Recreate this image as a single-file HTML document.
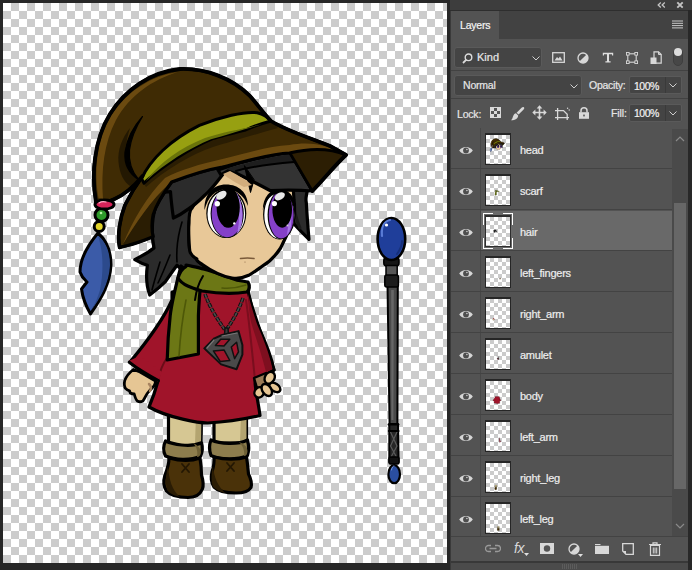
<!DOCTYPE html>
<html><head><meta charset="utf-8">
<style>
*{margin:0;padding:0;box-sizing:border-box}
html,body{width:692px;height:570px;overflow:hidden;background:#272727;font-family:"Liberation Sans",sans-serif;}
.abs{position:absolute}
#canvas{position:absolute;left:3px;top:3px;width:444px;height:560px;
 background:repeating-conic-gradient(#cccccc 0 25%,#ffffff 0 50%) 0 0/16px 16px;overflow:hidden}
#panel{position:absolute;left:450px;top:0;width:238px;height:570px;background:#535353;border-left:1px solid #3a3a3a}
#topstrip{position:absolute;left:450px;top:0;width:242px;height:10px;background:#3d3d3d}
#topline{position:absolute;left:450px;top:10px;width:238px;height:1px;background:#2e2e2e}
#tabbar{position:absolute;left:451px;top:11px;width:237px;height:28px;background:#424242}
#tab{position:absolute;left:451px;top:11px;width:48px;height:28px;background:#535353;color:#f4f4f4;font-size:10.5px;padding:8px 0 0 9px;letter-spacing:-0.2px}
#rstrip{position:absolute;left:688px;top:10px;width:4px;height:560px;background:#282828}
.dd{position:absolute;background:#444444;border:1px solid #5a5a5a;border-radius:3px;color:#eaeaea;font-size:11px}
.sep{position:absolute;left:451px;width:237px;height:1px;background:#424242}
.lbl{position:absolute;color:#e6e6e6;font-size:11px}
.row{position:absolute;left:451px;width:221px;height:41px;border-bottom:1px solid #434343}
.row .hl{position:absolute;left:30px;top:1px;width:191px;height:39px;background:#696969}
.row .eyecol{position:absolute;left:29px;top:0;width:1px;height:40px;background:#474747}
.row .thumb{position:absolute;left:34px;top:5px;width:26px;height:32px;border:1px solid #262626;border-top-width:2px;
 background:repeating-conic-gradient(#cbcbcb 0 25%,#ffffff 0 50%) 0 0/8px 8px}
.row.sel .thumb{border-color:#2e2e2e}
.row .name{position:absolute;left:69px;top:16px;color:#eeeeee;font-size:11px;letter-spacing:-0.25px}
.row svg.eye{position:absolute;left:8px;top:18px}
.brk{position:absolute;background:#fff}
.b1{left:32px;top:3px;width:10px;height:12px;background:none;border-left:1px solid #fff;border-top:1px solid #fff}
.b2{left:52px;top:3px;width:10px;height:12px;background:none;border-right:1px solid #fff;border-top:1px solid #fff}
.b3{left:32px;top:28px;width:10px;height:11px;background:none;border-left:1px solid #fff;border-bottom:1px solid #fff}
.b4{left:52px;top:28px;width:10px;height:11px;background:none;border-right:1px solid #fff;border-bottom:1px solid #fff}
.lbl,#tab,.row .name{-webkit-text-stroke:0.2px currentColor}
</style></head><body>
<div id="canvas"><svg class="abs" style="left:-3px;top:-3px" width="450" height="566" viewBox="0 0 450 566" stroke-linejoin="round" stroke-linecap="round">

<g stroke="#000">
<path d="M387.5 284 L397.8 284 L397.4 426 L389.6 426 Z" fill="#4a4a4a" stroke-width="2"/>
<path d="M391.2 290 L393.8 290 L393.4 420 L391.4 420Z" fill="#676767" stroke="none"/>
<path d="M389.3 424 H398 L398.6 462 H389.3Z" fill="#262626" stroke-width="2"/>
<path d="M390.5 432L397 446L390.5 458M397 432L390.5 446L397 458" fill="none" stroke="#5a5a5a" stroke-width="1.2"/>
<path d="M388.5 424.5 H398.5 M388.8 431 H398.6" stroke-width="2"/>
<rect x="389" y="457" width="10" height="7" rx="1.5" fill="#111" stroke-width="1.5"/>
<ellipse cx="394.2" cy="474.2" rx="5.8" ry="9" fill="#2a4ea0" stroke-width="2.2"/>
<path d="M391.5 470 C392 467 393 466 394 466" fill="none" stroke="#7a9ae0" stroke-width="1"/>
<rect x="383.8" y="257.5" width="15.2" height="8.5" rx="3" fill="#151515" stroke-width="1.5"/>
<rect x="386" y="265.5" width="11.2" height="10.5" fill="#555" stroke-width="1.5"/>
<rect x="384.8" y="275" width="13.6" height="12" rx="2" fill="#1c1c1c" stroke-width="1.5"/>
<ellipse cx="391.4" cy="239" rx="13.8" ry="21" fill="#1f3e9a" stroke-width="2.6"/>
<path d="M382 236 C381 226 385 221 390 220" fill="none" stroke="#5a7cd6" stroke-width="2.2"/>
<path d="M397 254 C400 250 402 246 402 241" fill="none" stroke="#16307a" stroke-width="2"/>
<circle cx="386.5" cy="225" r="1.6" fill="#fff" stroke="none"/>
</g>

<g stroke="#000" stroke-width="3.2"><path d="M214 416 L246.5 416 L246.5 443 L214 443Z" fill="#d6c793"/>
<path d="M241 416 L246.5 416 L246.5 442 L240 442Z" fill="#b3a470" stroke="none"/>
<path d="M211 440 C220 444 238 445 247.5 440 C249 446 249 451 247.5 455.5 C238 460 220 460 211 455.5 C209 450 209 445 211 440Z" fill="#8d7d4d"/>
<path d="M214 457 C225 460 238 460 246.5 457 C247.5 463 248 469 248.5 474 C251 479 252 484 251 487.5 C249 491 244 493 236 493 C226 493 218 491 214 487 C210.5 482 211 476 212 472 C213.5 467 214.5 462 214 457Z" fill="#4a3209"/>
<path d="M213 466 C211 474 211 482 213 487 C216 490 221 492 225 493 C218 486 214 478 213 466Z" fill="#2a1c04" stroke="none"/><path d="M239 442 C244 444 247 446 247.5 451 C247.5 454 246 456 244 456 C245 451 243 446 239 442Z" fill="#6e6036" stroke="none"/>
<path d="M227 463 L234 471 M234 463 L227 471" fill="none" stroke="#231703" stroke-width="1.8"/></g>
<g stroke="#000" stroke-width="3.2"><path d="M168.5 412 L201.5 412 L201 446 L168.5 446Z" fill="#d6c793"/>
<path d="M196 414 L201.5 414 L201 444 L195 444Z" fill="#b3a470" stroke="none"/>
<path d="M165.5 441 C172 444 190 448 201.5 442.8 C203 448 202 453 200.7 456 C190 461 175 460 165.5 456 C163 451 163 446 165.5 441Z" fill="#8d7d4d"/>
<path d="M169 458 C180 461 192 461 200 458 C201 464 201.5 470 201.5 475 C203 480 204 485 202.4 489 C200 495 195 497.5 188 497.5 C178 497.5 170 495 166.5 491 C163 486 163.5 480 165 475 C167 470 169 464 169 458Z" fill="#4a3209"/>
<path d="M168 466 C166 474 165 482 167 490 C170 494 176 496 180 497 C172 490 169 480 168 466Z" fill="#2a1c04" stroke="none"/><path d="M193 443 C197 445 200 447 201 452 C201 455 199 457 197 457 C198 452 197 447 193 443Z" fill="#6e6036" stroke="none"/>
<path d="M182 464 L189 472 M189 464 L182 472" fill="none" stroke="#231703" stroke-width="1.8"/></g>
<g stroke="#000" stroke-width="3.2"><path d="M247.6 291 C252 310 262 335 274 370 L255 380 C252 350 249 320 246 300Z" fill="#a0142a"/></g>
<g stroke="#000" stroke-width="3.2">
<path d="M172 300 C163 320 150 338 130 362 C140 371 150 377 158 381 C155 392 152 400 149 407 C168 418 200 423 207.7 423 C225 422 245 419 260 415.5 C258 400 255 390 255 380 C262 377 268 374 274 370 C270 350 262 335 256 322 C252 310 250 300 247.6 288 C225 290 195 288 172 292 L172 300Z" fill="#a0142a"/>
<path d="M158 381 C160 370 164 362 167 358" fill="none" stroke="#6a0c18" stroke-width="2"/>
<path d="M248 294 C251 305 254 315 257 324 C263 338 269 352 272.5 369 L266 372 C261 352 255 336 251 322 C249 312 248 302 248 294Z" fill="#7e0f1f" stroke="none"/><path d="M255 380 C252 350 249 320 246 300" fill="none" stroke="#7a0e1e" stroke-width="2"/>
</g>
<g stroke="#000" stroke-width="3.2">
<path d="M205 294 C210 308 218 320 225 330 M243 298 C238 312 232 322 226 330" fill="none" stroke="#111" stroke-width="3.6" stroke-dasharray="4.2 1" stroke-linecap="butt"/>
<path d="M205 294 C210 308 218 320 225 330 M243 298 C238 312 232 322 226 330" fill="none" stroke="#4a4a4a" stroke-width="1.6" stroke-dasharray="2.6 2.6" stroke-dashoffset="-0.8" stroke-linecap="round"/>

<path d="M225 328 L228 328 L228.5 335 L224.5 335Z" fill="#3a3a3a" stroke="#111" stroke-width="1.5"/>
<path d="M222.1 335 L238.5 331.1 L242.4 345 L242.4 354.7 L236.6 369.2 L221.1 364.4 L204.3 348.4 L214.4 338.3Z" fill="#4a4a4a" stroke="#111" stroke-width="2"/>
<path d="M215.4 345.6 L220.7 339.3 L229.8 339.3 L224 346Z M213.4 350.9 L224 349.9 L229.8 360.5 L220.2 361.5Z M231.3 347 L236.6 342.2 L238.5 351.8 L234.6 358.6Z" fill="#a0142a" stroke="#111" stroke-width="1.5"/>
<path d="M207 348 L214 340 M222 336 L237 333" fill="none" stroke="#777" stroke-width="1.2"/>
</g>
<g stroke="#000" stroke-width="3.2"><path d="M133.4 369.5 C129 373 126 377 124.7 380.5 C124 384 124.5 387 125.5 388.4 C127 390 128.5 390.5 129.5 390.8 L130.3 393 C132 394 133 394 134.2 394 C135 397 136 400 137.4 401 C139 402 141 402 142.9 401 C145 398 146 395 147.6 393 C150 390 152 388 154 386 C155 384.5 155.5 383 155.5 381 L140 372Z" fill="#e6c694" stroke-width="2.8"/>
<path d="M149 384 C151 386 152 388 150 391" fill="none" stroke="#a88460" stroke-width="2.5"/><path d="M128.5 361 C138 368 148 375 159 380 L162 372 L140 356Z" fill="#a0142a" stroke="none"/><path d="M129.2 362.2 C138 369 148 375 158.4 380.5" fill="none" stroke-width="3"/></g>
<g stroke="#000" stroke-width="3.2"><path d="M254 378 L266 373 L268 386 L257 388Z" fill="#9a7a55" stroke-width="2.4"/><ellipse cx="259.3" cy="392.3" rx="4.6" ry="5.4" transform="rotate(35 259.3 392.3)" fill="#e6c694" stroke-width="2.4"/><ellipse cx="274.8" cy="387.4" rx="6.2" ry="3.9" transform="rotate(35 274.8 387.4)" fill="#e6c694" stroke-width="2.4"/><ellipse cx="266.8" cy="390" rx="4.4" ry="6.6" transform="rotate(-35 266.8 390)" fill="#e6c694" stroke-width="2.4"/><ellipse cx="269.7" cy="377.8" rx="4.8" ry="6.3" transform="rotate(30 269.7 377.8)" fill="#e6c694" stroke-width="2.4"/></g>
<g stroke="#000" stroke-width="3.2"><clipPath id="cpPony"><rect x="100" y="238" width="120" height="80"/></clipPath><g clip-path="url(#cpPony)">
<path d="M168 186 L225 169 C218 180 208 190 204 195 C199 200 196 205 193.8 208.4 C191 215 189 220 189 223 C188.5 235 189 245 189.5 248.4 C190 254 194 257 196.8 259 C198 262 200 263 204 266 L206 274 L186 274 C182 270 179 267 177 265.3 C172 272 168 278 165.7 281.3 C160 287 155 291 149.7 295 C146 285 146 275 147.4 265.3 C143 264 139 262 134.8 259.6 C141 256 148 253 154 248 C151 232 152 218 156 205 C160 195 163 190 168 186Z" fill="#2b2b2b"/>
<path d="M160 262 C157 272 154 282 152 290 M170 255 C166 265 162 275 158 283 M182 222 C178 235 176 248 177 262" fill="none" stroke="#000" stroke-width="1.6"/>
</g></g>
<g stroke="#000" stroke-width="3.2">
<path d="M181 266 C176 285 172 300 170.2 315.5 C168 335 167.5 348 167.2 360 C178 358 188 356 198.4 354 C198.5 340 198.4 328 198.4 315.5 C199 300 200 290 201 282Z" fill="#6c7715"/>
<path d="M186 300 C182 320 180 340 179 356" fill="none" stroke="#4e5808" stroke-width="1.6"/>

<path d="M186 265 C195 267 200 268 203.4 269 C215 272 225 276 232.3 278.5 C238 281 243 281 248 282 C250 286 250 289 247 292 C235 294 220 294 202 291 C192 288 182 285 178 278 C180 272 183 268 186 266.6Z" fill="#6c7715"/>
<path d="M203 276 C198 284 196 292 195 300" fill="none" stroke="#000" stroke-width="2"/>
<path d="M222 288 C232 289 240 287 246 285" fill="none" stroke="#4e5808" stroke-width="1.5"/>
</g>
<g stroke="#000" stroke-width="3.2"><clipPath id="cpTop"><rect x="100" y="100" width="250" height="150"/></clipPath>
<path d="M150 215 L168 172 L222 158 L290 148 L312.4 191 L290 195 L200 200Z" fill="#1e1e1e" stroke="none"/>
<g clip-path="url(#cpTop)">
<path d="M168 186 L225 169 C218 180 208 190 204 195 C199 200 196 205 193.8 208.4 C191 215 189 220 189 223 C188.5 235 189 245 189.5 248.4 C190 254 194 257 196.8 259 C198 262 200 263 204 266 L206 274 L186 274 C182 270 179 267 177 265.3 C172 272 168 278 165.7 281.3 C160 287 155 291 149.7 295 C146 285 146 275 147.4 265.3 C143 264 139 262 134.8 259.6 C141 256 148 253 154 248 C151 232 152 218 156 205 C160 195 163 190 168 186Z" fill="#2b2b2b"/>
<path d="M160 262 C157 272 154 282 152 290 M170 255 C166 265 162 275 158 283 M182 222 C178 235 176 248 177 262" fill="none" stroke="#000" stroke-width="1.6"/>
</g>
<path d="M290.5 189 L307.5 190 C306 196 305.5 200 306.3 202.6 C307 215 308 228 309 239.5 C303 233 297 228 294 223.7 C292.5 216 292.3 208 292.3 202.6Z" fill="#2b2b2b"/>
<path d="M292.5 195 C294 210 296 220 300 228" fill="none" stroke="#1a1a1a" stroke-width="3"/>

<path d="M221 172 C240 165 270 162 292 170 L294 200 C296 215 292 225 289.7 227.4 C286 238 282 245 280.6 248 C274 258 268 263 262.3 266.2 C257 270 253 273 248.7 275.3 C243 278 238 279 232 278 C220 276 210 270 202 264.2 C198 262 196 260 196.8 259 C190 255 189.5 250 189.5 248.4 C188.5 235 188.5 228 189 223 C189 215 190 210 191.8 208.4 C197 199 202 195 204 195 C212 185 220 175 225 169Z" fill="#e8c898"/>

<path d="M168.4 181 C170 176 200 165 228 165 L228 167.5 C226 170 224 172 222.5 174.7 C217 182 211 190 205 195 C199 201 193 206 187.8 209.4 C183 213 178 216 173.4 218 C172 208 171 200 170.5 191.6 C166 192 163 192 160 193 C163 188 166 184 168.4 181Z" fill="#2b2b2b"/>

<path d="M218 170 C240 162 270 154 289.7 152.3 C298 165 306 180 312.4 191 C300 190 285 190 270 190.5 C258 184 242 176 229.5 170 L221 175Z" fill="#333333"/>
<path d="M226 169 C245 163 270 157 290 154 L295 162 C272 164 248 167 236 172Z" fill="#1e1e1e" stroke="none"/><path d="M236 171 C250 167 270 164 294 162" fill="none" stroke="#000" stroke-width="2"/><path d="M244.5 166 L250.5 192.5 L254 180 Z" fill="#000" stroke-width="1"/>
<g stroke="none">
<path d="M223 174 L230 171 C238 175 246 180 252 185 L244 187 C236 183 228 178 223 174Z" fill="#d2ad7c"/>
<ellipse cx="226.3" cy="213.5" rx="20" ry="24.5" fill="#000"/>
<ellipse cx="226.3" cy="214" rx="18.8" ry="23.2" fill="#fff"/>
<ellipse cx="227.2" cy="213.8" rx="16.6" ry="24" fill="#000"/>
<ellipse cx="227.2" cy="214" rx="15.6" ry="23.2" fill="#8540c8"/>
<path d="M236 192 C241 198 243 210 242 222 C241 228 239 232 237 234 C240 222 240 205 236 192Z" fill="#a878e8"/>
<ellipse cx="228.2" cy="207.5" rx="11.6" ry="20.3" fill="#000"/>
<path d="M204.5 210 C204 194 213 184.5 226 184.5 C239 184.5 248 193 248 206 C244 195 236 189.5 226 189.5 C215 189.5 208 197 204.5 210Z" fill="#000"/>
<ellipse cx="221.4" cy="195.3" rx="5.8" ry="3.6" fill="#e8e8e8" transform="rotate(-35 221.4 195.3)"/>
<circle cx="217.3" cy="203.8" r="2.7" fill="#fff"/>
<circle cx="234.3" cy="223.4" r="1.2" fill="#fff"/>
<ellipse cx="279.3" cy="214.5" rx="16.2" ry="25" fill="#000"/>
<ellipse cx="279.3" cy="215" rx="15" ry="23.8" fill="#fff"/>
<ellipse cx="281" cy="215" rx="13.4" ry="24.2" fill="#000"/>
<ellipse cx="281.2" cy="215.2" rx="12.4" ry="23.4" fill="#8540c8"/>
<path d="M287 196 C291 204 292 216 291 226 C290 230 289 233 287 235 C289 222 290 208 287 196Z" fill="#a878e8"/>
<ellipse cx="282.2" cy="209.5" rx="9.8" ry="18.2" fill="#000"/>
<path d="M262.8 210 C263 197 270 189 279.5 189 C289 189 295.5 197 295.5 209 C292 199 286 193.5 279.5 193.5 C272 193.5 266 199 262.8 210Z" fill="#000"/>
<ellipse cx="279.8" cy="196.3" rx="5.5" ry="3.5" fill="#e8e8e8" transform="rotate(-30 279.8 196.3)"/>
<circle cx="274.4" cy="203.6" r="2.6" fill="#fff"/>
<circle cx="287.5" cy="225.5" r="1" fill="#ccc"/>
</g>
<path d="M240.5 258.5 C245 257.8 250 257.8 254 258.5" fill="none" stroke="#7a5a3a" stroke-width="1.6"/><circle cx="245" cy="262" r="0.6" fill="#8a6a4a" stroke="none"/>

<path d="M96 202 C91 175 94 140 110 114 C125 90 150 72 180 69 C205 68 232 78 250 96 C258 105 264 114 271 121 C285 130 310 138 330 146 L346 155 C335 165 325 178 312.4 191 L289.7 152.3 C270 154 250 160 222.5 167 C205 170 190 175 171.6 182 C162 195 156 205 153 215 C151 225 152 232 153 236.7 C145 240 135 244 127.5 245.4 L119.6 247.5 C117 235 120 218 125 205 C130 195 136 185 142.6 176 C135 185 124 195 114.6 199 C108 202 101 203 96 202Z" fill="#3f2b04"/>

<path d="M289.7 152.3 C310 148 330 148 344 155 C335 165 325 178 312.4 191Z" fill="#2c1e03" stroke="none"/>
<path d="M289.7 152.3 L312.4 191" fill="none" stroke-width="2.5"/>

<path d="M98.5 198 C94 172 96 142 111 116 C125 93 150 76 178 72 C152 80 130 95 116 120 C104 143 101 170 103 199Z" fill="#6b4a10" stroke="none"/>

<path d="M127.5 245.4 C135 244 145 240 153 236.7 C152 232 151 225 153 215 C156 205 162 195 171.6 182 C150 200 135 225 123 244Z" fill="#2a1d03" stroke="none"/>
<path d="M146 187 C165 170 192 154 213 147 C230 142 250 136 278 128 L271 121 C260 124 252 127 245.6 130 C230 134 218 137 211 139.3 C190 148 160 168 143.9 183.2Z" fill="#2a1d03" stroke="none"/>
<path d="M123 244 C135 225 150 200 171.6 182 C190 175 205 170 222.5 167 C250 160 270 154 289.5 153 C310 148 330 148 344 155 C330 145 310 141 289.5 145 C270 146 250 152 222.5 159 C200 164 180 170 165 178 C147 196 133 220 123 244Z" fill="#6b4a10" stroke="none"/>

<path d="M130 128 C122 138 117.5 150 118.5 162 C119.5 174 124 182 130 186 L139 180 C128 173 124 163 125 152 C126 142 128 134 130 128Z" fill="#231802" stroke="none"/><path d="M142.5 116.5 C134 126 127 138 125 152 C124 163 128 173 139 180 C131 171 128.5 161 129.5 150 C131 138 136 127 142.5 116.5Z" fill="#000" stroke-width="1.2"/>

<path d="M119.6 247.5 C135 244 145 240 153 236.7 C152 232 151 225 153 215 C156 205 162 195 171.6 182 C190 175 205 170 222.5 167 C250 160 270 154 289.5 153 C310 148 330 148 346 155" fill="none" stroke-width="3"/>

<path d="M141.6 178.6 C150 160 170 140 199.4 125.4 C220 117 245 111 257.2 112.7 C263 114 268 117 271 121 C260 124 252 127 245.6 130 C230 134 218 137 211 139.3 C190 148 160 168 143.9 183.2Z" fill="#97a011" stroke-width="3"/>
<path d="M146 181 C165 163 190 148 211 139.3 C230 134 252 127 270 122 C250 128 225 131 205 138 C180 148 160 162 146 181Z" fill="#6a740a" stroke="none"/>

<path d="M96 202 C91 175 94 140 110 114 C125 90 150 72 180 69 C205 68 232 78 250 96 C258 105 264 114 271 121 C285 130 310 138 330 146 L346 155 C335 165 325 178 312.4 191" fill="none" stroke-width="3.8"/>
<path d="M119.6 247.5 C117 235 120 218 125 205 C130 195 136 185 142.6 176 C135 185 124 195 114.6 199 C108 202 101 203 96 202" fill="none" stroke-width="3.6"/>

<circle cx="99.2" cy="226.5" r="5" fill="#e2d42a" stroke-width="3"/>
<circle cx="101.5" cy="215" r="6.5" fill="#2e9a2a" stroke-width="3"/>
<ellipse cx="104.5" cy="204.5" rx="9.5" ry="4.6" fill="#d8245a" stroke-width="3"/>
<path d="M99 203 C101 201.5 104 201.5 106 202" fill="none" stroke="#ffb0c8" stroke-width="1.2"/>
<circle cx="101" cy="213" r="1.3" fill="#b0f0a0" stroke="none"/>

<path d="M98 233 C88 245 80 258 80 272 C82 278 86 281 87 282 L81.5 289 C83 300 87 308 90.5 314 C100 300 110 285 111 265 C111 250 106 240 98 233Z" fill="#3b5ba8" stroke-width="3"/>
<path d="M98 236 C103 250 104 270 100 290 C97 300 94 306 91 311 C100 298 109 284 110 265 C110 252 106 242 98 236Z" fill="#2c4a8c" stroke="none"/>
</g>
</svg></div>
<div id="panel"></div>
<div id="topstrip"></div>
<div id="topline"></div>
<div id="tabbar"></div>
<div id="tab">Layers</div>
<div id="rstrip"></div>
<!-- top strip icons -->
<svg class="abs" style="left:657px;top:2px" width="9" height="6" viewBox="0 0 9 6"><path d="M3.8 0.6L1.2 3L3.8 5.4M7.8 0.6L5.2 3L7.8 5.4" fill="none" stroke="#c4c4c4" stroke-width="1.3"/></svg>
<svg class="abs" style="left:676px;top:1px" width="8" height="8" viewBox="0 0 8 8"><path d="M1.3 1.3L6.7 6.7M6.7 1.3L1.3 6.7" stroke="#c4c4c4" stroke-width="1.9"/></svg>
<!-- menu icon -->
<svg class="abs" style="left:672px;top:20px" width="11" height="9" viewBox="0 0 11 9"><path d="M0 1H11M0 3.3H11M0 5.6H11M0 7.9H11" stroke="#c8c8c8" stroke-width="1"/></svg>
<!-- kind dropdown -->
<div class="dd" style="left:454px;top:47px;width:88px;height:21px"></div>
<svg class="abs" style="left:462px;top:53px" width="11" height="11" viewBox="0 0 11 11"><circle cx="6.5" cy="4.3" r="3.3" fill="none" stroke="#dcdcdc" stroke-width="1.4"/><path d="M4.3 6.6L1 10" stroke="#dcdcdc" stroke-width="1.8"/></svg>
<div class="lbl" style="left:477px;top:51px;font-size:11px">Kind</div>
<svg class="abs" style="left:532px;top:56px" width="8" height="5" viewBox="0 0 8 5"><path d="M0.5 0.5L4 4L7.5 0.5" fill="none" stroke="#cfcfcf" stroke-width="1"/></svg>
<!-- filter icons -->
<svg class="abs" style="left:552px;top:52px" width="13" height="11" viewBox="0 0 13 11"><rect x="0.7" y="0.7" width="11.6" height="9.6" fill="none" stroke="#d8d8d8" stroke-width="1.3"/><path d="M2.5 8.5L5 5L6.5 6.5L8 4.5L10.5 8.5Z" fill="#d8d8d8"/></svg>
<svg class="abs" style="left:577px;top:52px" width="12" height="12" viewBox="0 0 12 12"><circle cx="6" cy="6" r="5" fill="none" stroke="#d8d8d8" stroke-width="1.3"/><path d="M9.6 2.4A5 5 0 0 1 2.4 9.6Z" fill="#d8d8d8"/></svg>
<svg class="abs" style="left:602px;top:52px" width="12" height="11" viewBox="0 0 12 11"><path d="M0.8 0.8H11.2V3.5H10V2.3H7V9.2H8.6V10.4H3.4V9.2H5V2.3H2V3.5H0.8Z" fill="#dedede"/></svg>
<svg class="abs" style="left:626px;top:52px" width="12" height="12" viewBox="0 0 12 12"><rect x="1.8" y="1.8" width="8.4" height="8.4" fill="none" stroke="#d8d8d8" stroke-width="1.1"/><g fill="#535353" stroke="#d8d8d8" stroke-width="0.9"><rect x="0.45" y="0.45" width="2.7" height="2.7"/><rect x="8.85" y="0.45" width="2.7" height="2.7"/><rect x="0.45" y="8.85" width="2.7" height="2.7"/><rect x="8.85" y="8.85" width="2.7" height="2.7"/></g></svg>
<svg class="abs" style="left:650px;top:51px" width="12" height="14" viewBox="0 0 12 14"><path d="M4 0.8H8.5L11.2 3.5V12.2H4Z" fill="none" stroke="#d8d8d8" stroke-width="1.2"/><path d="M8.5 0.8V3.5H11.2" fill="none" stroke="#d8d8d8" stroke-width="1"/><rect x="0.5" y="6.5" width="6" height="6.5" fill="#d8d8d8"/></svg>
<div class="abs" style="left:673px;top:48px;width:10px;height:18px;border-radius:5px;background:#474747;border:1px solid #3e3e3e"></div>
<div class="abs" style="left:674px;top:48px;width:8.4px;height:8.4px;border-radius:50%;background:#dcdcdc"></div>
<div class="sep" style="top:70px"></div>
<!-- normal dropdown -->
<div class="dd" style="left:454px;top:75px;width:128px;height:21px"></div>
<div class="lbl" style="left:463px;top:79px;font-size:10.5px;letter-spacing:-0.2px">Normal</div>
<svg class="abs" style="left:570px;top:84px" width="8" height="5" viewBox="0 0 8 5"><path d="M0.5 0.5L4 4L7.5 0.5" fill="none" stroke="#cfcfcf" stroke-width="1"/></svg>
<div class="lbl" style="left:589px;top:79px;font-size:10.5px;letter-spacing:-0.25px">Opacity:</div>
<div class="dd" style="left:629px;top:76px;width:53px;height:18px;border-radius:2px"></div>
<div class="abs" style="left:665px;top:77px;width:1px;height:16px;background:#3a3a3a"></div>
<div class="lbl" style="left:634px;top:80px;color:#f2f2f2;font-size:10.5px;letter-spacing:-0.5px">100%</div>
<svg class="abs" style="left:669px;top:83px" width="8" height="5" viewBox="0 0 8 5"><path d="M0.5 0.5L4 4L7.5 0.5" fill="none" stroke="#cfcfcf" stroke-width="1"/></svg>
<div class="sep" style="top:98px"></div>
<!-- lock row -->
<div class="lbl" style="left:457px;top:108px;font-size:10.5px;letter-spacing:-0.2px">Lock:</div>
<svg class="abs" style="left:490px;top:107px" width="11" height="11" viewBox="0 0 11 11"><rect x="0.5" y="0.5" width="10" height="10" fill="none" stroke="#d8d8d8" stroke-width="1"/><g fill="#d8d8d8"><rect x="1" y="1" width="3" height="3"/><rect x="7" y="1" width="3" height="3"/><rect x="4" y="4" width="3" height="3"/><rect x="1" y="7" width="3" height="3"/><rect x="7" y="7" width="3" height="3"/></g></svg>
<svg class="abs" style="left:510px;top:106px" width="15" height="15" viewBox="0 0 15 15"><path d="M13.8 1.2 C14.6 1.8 14.4 2.6 13.6 3.4 L8.6 8.6 L6.6 6.8 L11.8 1.6 C12.5 0.9 13.2 0.7 13.8 1.2Z" fill="#d8d8d8"/><path d="M6 7.3 L8.2 9.4 C8 12.2 5.6 14.2 1 14.3 C2.5 13 2.6 11.5 3.2 10 C3.8 8.5 4.8 7.5 6 7.3Z" fill="#d8d8d8"/></svg>
<svg class="abs" style="left:532px;top:105px" width="15" height="15" viewBox="0 0 15 15"><path d="M7.5 2 V13 M2 7.5 H13" stroke="#d8d8d8" stroke-width="1.6"/><path d="M7.5 0.3 L4.6 3.4 H10.4Z M7.5 14.7 L4.6 11.6 H10.4Z M0.3 7.5 L3.4 4.6 V10.4Z M14.7 7.5 L11.6 4.6 V10.4Z" fill="#d8d8d8"/></svg>
<svg class="abs" style="left:554px;top:107px" width="16" height="14" viewBox="0 0 16 14"><path d="M1 3.6 H9.5 L13.2 7.3 V13 M3.6 1 V13 M1 10.7 H15" fill="none" stroke="#d8d8d8" stroke-width="1.3"/><circle cx="13.6" cy="1.2" r="0.7" fill="#d8d8d8"/><circle cx="15.2" cy="3" r="0.7" fill="#d8d8d8"/></svg>
<svg class="abs" style="left:578px;top:107px" width="12" height="12" viewBox="0 0 12 12"><path d="M3 5.5V3.8A3 3 0 0 1 9 3.8V5.5" fill="none" stroke="#d8d8d8" stroke-width="1.5"/><rect x="1" y="5.2" width="10" height="6.6" fill="#d8d8d8"/><rect x="5.2" y="7.6" width="1.6" height="1.8" fill="#535353"/></svg>
<div class="lbl" style="left:611px;top:107px;font-size:10.5px;letter-spacing:-0.1px">Fill:</div>
<div class="dd" style="left:629px;top:104px;width:53px;height:18px;border-radius:2px"></div>
<div class="abs" style="left:665px;top:105px;width:1px;height:16px;background:#3a3a3a"></div>
<div class="lbl" style="left:634px;top:107px;color:#f2f2f2;font-size:10.5px;letter-spacing:-0.5px">100%</div>
<svg class="abs" style="left:669px;top:111px" width="8" height="5" viewBox="0 0 8 5"><path d="M0.5 0.5L4 4L7.5 0.5" fill="none" stroke="#cfcfcf" stroke-width="1"/></svg>

<div class="row" style="top:128px"><div class="eyecol"></div><svg class="eye" width="14" height="9" viewBox="0 0 14 9"><path d="M0.2 4.5C2.8 -0.3 11.2 -0.3 13.8 4.5C11.2 9.3 2.8 9.3 0.2 4.5Z" fill="#d6d6d6"/><circle cx="7" cy="4.5" r="2.9" fill="#4e4e4e"/><circle cx="7.9" cy="3.5" r="0.8" fill="#cfcfcf"/></svg><div class="thumb"><svg width="24" height="30" viewBox="3 3 444 555" preserveAspectRatio="xMinYMin meet" style="position:absolute;left:0;top:0" stroke-linejoin="round"><g stroke="#000" stroke-width="3.2"><clipPath id="cpTop_t0"><rect x="100" y="100" width="250" height="150"/></clipPath>
<path d="M150 215 L168 172 L222 158 L290 148 L312.4 191 L290 195 L200 200Z" fill="#1e1e1e" stroke="none"/>
<g clip-path="url(#cpTop_t0)">
<path d="M168 186 L225 169 C218 180 208 190 204 195 C199 200 196 205 193.8 208.4 C191 215 189 220 189 223 C188.5 235 189 245 189.5 248.4 C190 254 194 257 196.8 259 C198 262 200 263 204 266 L206 274 L186 274 C182 270 179 267 177 265.3 C172 272 168 278 165.7 281.3 C160 287 155 291 149.7 295 C146 285 146 275 147.4 265.3 C143 264 139 262 134.8 259.6 C141 256 148 253 154 248 C151 232 152 218 156 205 C160 195 163 190 168 186Z" fill="#2b2b2b"/>
<path d="M160 262 C157 272 154 282 152 290 M170 255 C166 265 162 275 158 283 M182 222 C178 235 176 248 177 262" fill="none" stroke="#000" stroke-width="1.6"/>
</g>
<path d="M290.5 189 L307.5 190 C306 196 305.5 200 306.3 202.6 C307 215 308 228 309 239.5 C303 233 297 228 294 223.7 C292.5 216 292.3 208 292.3 202.6Z" fill="#2b2b2b"/>
<path d="M292.5 195 C294 210 296 220 300 228" fill="none" stroke="#1a1a1a" stroke-width="3"/>

<path d="M221 172 C240 165 270 162 292 170 L294 200 C296 215 292 225 289.7 227.4 C286 238 282 245 280.6 248 C274 258 268 263 262.3 266.2 C257 270 253 273 248.7 275.3 C243 278 238 279 232 278 C220 276 210 270 202 264.2 C198 262 196 260 196.8 259 C190 255 189.5 250 189.5 248.4 C188.5 235 188.5 228 189 223 C189 215 190 210 191.8 208.4 C197 199 202 195 204 195 C212 185 220 175 225 169Z" fill="#e8c898"/>

<path d="M168.4 181 C170 176 200 165 228 165 L228 167.5 C226 170 224 172 222.5 174.7 C217 182 211 190 205 195 C199 201 193 206 187.8 209.4 C183 213 178 216 173.4 218 C172 208 171 200 170.5 191.6 C166 192 163 192 160 193 C163 188 166 184 168.4 181Z" fill="#2b2b2b"/>

<path d="M218 170 C240 162 270 154 289.7 152.3 C298 165 306 180 312.4 191 C300 190 285 190 270 190.5 C258 184 242 176 229.5 170 L221 175Z" fill="#333333"/>
<path d="M226 169 C245 163 270 157 290 154 L295 162 C272 164 248 167 236 172Z" fill="#1e1e1e" stroke="none"/><path d="M236 171 C250 167 270 164 294 162" fill="none" stroke="#000" stroke-width="2"/><path d="M244.5 166 L250.5 192.5 L254 180 Z" fill="#000" stroke-width="1"/>
<g stroke="none">
<path d="M223 174 L230 171 C238 175 246 180 252 185 L244 187 C236 183 228 178 223 174Z" fill="#d2ad7c"/>
<ellipse cx="226.3" cy="213.5" rx="20" ry="24.5" fill="#000"/>
<ellipse cx="226.3" cy="214" rx="18.8" ry="23.2" fill="#fff"/>
<ellipse cx="227.2" cy="213.8" rx="16.6" ry="24" fill="#000"/>
<ellipse cx="227.2" cy="214" rx="15.6" ry="23.2" fill="#8540c8"/>
<path d="M236 192 C241 198 243 210 242 222 C241 228 239 232 237 234 C240 222 240 205 236 192Z" fill="#a878e8"/>
<ellipse cx="228.2" cy="207.5" rx="11.6" ry="20.3" fill="#000"/>
<path d="M204.5 210 C204 194 213 184.5 226 184.5 C239 184.5 248 193 248 206 C244 195 236 189.5 226 189.5 C215 189.5 208 197 204.5 210Z" fill="#000"/>
<ellipse cx="221.4" cy="195.3" rx="5.8" ry="3.6" fill="#e8e8e8" transform="rotate(-35 221.4 195.3)"/>
<circle cx="217.3" cy="203.8" r="2.7" fill="#fff"/>
<circle cx="234.3" cy="223.4" r="1.2" fill="#fff"/>
<ellipse cx="279.3" cy="214.5" rx="16.2" ry="25" fill="#000"/>
<ellipse cx="279.3" cy="215" rx="15" ry="23.8" fill="#fff"/>
<ellipse cx="281" cy="215" rx="13.4" ry="24.2" fill="#000"/>
<ellipse cx="281.2" cy="215.2" rx="12.4" ry="23.4" fill="#8540c8"/>
<path d="M287 196 C291 204 292 216 291 226 C290 230 289 233 287 235 C289 222 290 208 287 196Z" fill="#a878e8"/>
<ellipse cx="282.2" cy="209.5" rx="9.8" ry="18.2" fill="#000"/>
<path d="M262.8 210 C263 197 270 189 279.5 189 C289 189 295.5 197 295.5 209 C292 199 286 193.5 279.5 193.5 C272 193.5 266 199 262.8 210Z" fill="#000"/>
<ellipse cx="279.8" cy="196.3" rx="5.5" ry="3.5" fill="#e8e8e8" transform="rotate(-30 279.8 196.3)"/>
<circle cx="274.4" cy="203.6" r="2.6" fill="#fff"/>
<circle cx="287.5" cy="225.5" r="1" fill="#ccc"/>
</g>
<path d="M240.5 258.5 C245 257.8 250 257.8 254 258.5" fill="none" stroke="#7a5a3a" stroke-width="1.6"/><circle cx="245" cy="262" r="0.6" fill="#8a6a4a" stroke="none"/>

<path d="M96 202 C91 175 94 140 110 114 C125 90 150 72 180 69 C205 68 232 78 250 96 C258 105 264 114 271 121 C285 130 310 138 330 146 L346 155 C335 165 325 178 312.4 191 L289.7 152.3 C270 154 250 160 222.5 167 C205 170 190 175 171.6 182 C162 195 156 205 153 215 C151 225 152 232 153 236.7 C145 240 135 244 127.5 245.4 L119.6 247.5 C117 235 120 218 125 205 C130 195 136 185 142.6 176 C135 185 124 195 114.6 199 C108 202 101 203 96 202Z" fill="#3f2b04"/>

<path d="M289.7 152.3 C310 148 330 148 344 155 C335 165 325 178 312.4 191Z" fill="#2c1e03" stroke="none"/>
<path d="M289.7 152.3 L312.4 191" fill="none" stroke-width="2.5"/>

<path d="M98.5 198 C94 172 96 142 111 116 C125 93 150 76 178 72 C152 80 130 95 116 120 C104 143 101 170 103 199Z" fill="#6b4a10" stroke="none"/>

<path d="M127.5 245.4 C135 244 145 240 153 236.7 C152 232 151 225 153 215 C156 205 162 195 171.6 182 C150 200 135 225 123 244Z" fill="#2a1d03" stroke="none"/>
<path d="M146 187 C165 170 192 154 213 147 C230 142 250 136 278 128 L271 121 C260 124 252 127 245.6 130 C230 134 218 137 211 139.3 C190 148 160 168 143.9 183.2Z" fill="#2a1d03" stroke="none"/>
<path d="M123 244 C135 225 150 200 171.6 182 C190 175 205 170 222.5 167 C250 160 270 154 289.5 153 C310 148 330 148 344 155 C330 145 310 141 289.5 145 C270 146 250 152 222.5 159 C200 164 180 170 165 178 C147 196 133 220 123 244Z" fill="#6b4a10" stroke="none"/>

<path d="M130 128 C122 138 117.5 150 118.5 162 C119.5 174 124 182 130 186 L139 180 C128 173 124 163 125 152 C126 142 128 134 130 128Z" fill="#231802" stroke="none"/><path d="M142.5 116.5 C134 126 127 138 125 152 C124 163 128 173 139 180 C131 171 128.5 161 129.5 150 C131 138 136 127 142.5 116.5Z" fill="#000" stroke-width="1.2"/>

<path d="M119.6 247.5 C135 244 145 240 153 236.7 C152 232 151 225 153 215 C156 205 162 195 171.6 182 C190 175 205 170 222.5 167 C250 160 270 154 289.5 153 C310 148 330 148 346 155" fill="none" stroke-width="3"/>

<path d="M141.6 178.6 C150 160 170 140 199.4 125.4 C220 117 245 111 257.2 112.7 C263 114 268 117 271 121 C260 124 252 127 245.6 130 C230 134 218 137 211 139.3 C190 148 160 168 143.9 183.2Z" fill="#97a011" stroke-width="3"/>
<path d="M146 181 C165 163 190 148 211 139.3 C230 134 252 127 270 122 C250 128 225 131 205 138 C180 148 160 162 146 181Z" fill="#6a740a" stroke="none"/>

<path d="M96 202 C91 175 94 140 110 114 C125 90 150 72 180 69 C205 68 232 78 250 96 C258 105 264 114 271 121 C285 130 310 138 330 146 L346 155 C335 165 325 178 312.4 191" fill="none" stroke-width="3.8"/>
<path d="M119.6 247.5 C117 235 120 218 125 205 C130 195 136 185 142.6 176 C135 185 124 195 114.6 199 C108 202 101 203 96 202" fill="none" stroke-width="3.6"/>

<circle cx="99.2" cy="226.5" r="5" fill="#e2d42a" stroke-width="3"/>
<circle cx="101.5" cy="215" r="6.5" fill="#2e9a2a" stroke-width="3"/>
<ellipse cx="104.5" cy="204.5" rx="9.5" ry="4.6" fill="#d8245a" stroke-width="3"/>
<path d="M99 203 C101 201.5 104 201.5 106 202" fill="none" stroke="#ffb0c8" stroke-width="1.2"/>
<circle cx="101" cy="213" r="1.3" fill="#b0f0a0" stroke="none"/>

<path d="M98 233 C88 245 80 258 80 272 C82 278 86 281 87 282 L81.5 289 C83 300 87 308 90.5 314 C100 300 110 285 111 265 C111 250 106 240 98 233Z" fill="#3b5ba8" stroke-width="3"/>
<path d="M98 236 C103 250 104 270 100 290 C97 300 94 306 91 311 C100 298 109 284 110 265 C110 252 106 242 98 236Z" fill="#2c4a8c" stroke="none"/>
</g></svg></div><div class="name">head</div></div>
<div class="row" style="top:169px"><div class="eyecol"></div><svg class="eye" width="14" height="9" viewBox="0 0 14 9"><path d="M0.2 4.5C2.8 -0.3 11.2 -0.3 13.8 4.5C11.2 9.3 2.8 9.3 0.2 4.5Z" fill="#d6d6d6"/><circle cx="7" cy="4.5" r="2.9" fill="#4e4e4e"/><circle cx="7.9" cy="3.5" r="0.8" fill="#cfcfcf"/></svg><div class="thumb"><svg width="24" height="30" viewBox="3 3 444 555" preserveAspectRatio="xMinYMin meet" style="position:absolute;left:0;top:0" stroke-linejoin="round"><g stroke="#000" stroke-width="3.2">
<path d="M181 266 C176 285 172 300 170.2 315.5 C168 335 167.5 348 167.2 360 C178 358 188 356 198.4 354 C198.5 340 198.4 328 198.4 315.5 C199 300 200 290 201 282Z" fill="#6c7715"/>
<path d="M186 300 C182 320 180 340 179 356" fill="none" stroke="#4e5808" stroke-width="1.6"/>

<path d="M186 265 C195 267 200 268 203.4 269 C215 272 225 276 232.3 278.5 C238 281 243 281 248 282 C250 286 250 289 247 292 C235 294 220 294 202 291 C192 288 182 285 178 278 C180 272 183 268 186 266.6Z" fill="#6c7715"/>
<path d="M203 276 C198 284 196 292 195 300" fill="none" stroke="#000" stroke-width="2"/>
<path d="M222 288 C232 289 240 287 246 285" fill="none" stroke="#4e5808" stroke-width="1.5"/>
</g></svg></div><div class="name">scarf</div></div>
<div class="row sel" style="top:210px"><div class="hl"></div><div class="eyecol"></div><svg class="eye" width="14" height="9" viewBox="0 0 14 9"><path d="M0.2 4.5C2.8 -0.3 11.2 -0.3 13.8 4.5C11.2 9.3 2.8 9.3 0.2 4.5Z" fill="#d6d6d6"/><circle cx="7" cy="4.5" r="2.9" fill="#4e4e4e"/><circle cx="7.9" cy="3.5" r="0.8" fill="#cfcfcf"/></svg><div class="thumb"><svg width="24" height="30" viewBox="3 3 444 555" preserveAspectRatio="xMinYMin meet" style="position:absolute;left:0;top:0" stroke-linejoin="round"><g stroke="#000" stroke-width="3.2"><clipPath id="cpPony_t2"><rect x="100" y="238" width="120" height="80"/></clipPath><g clip-path="url(#cpPony_t2)">
<path d="M168 186 L225 169 C218 180 208 190 204 195 C199 200 196 205 193.8 208.4 C191 215 189 220 189 223 C188.5 235 189 245 189.5 248.4 C190 254 194 257 196.8 259 C198 262 200 263 204 266 L206 274 L186 274 C182 270 179 267 177 265.3 C172 272 168 278 165.7 281.3 C160 287 155 291 149.7 295 C146 285 146 275 147.4 265.3 C143 264 139 262 134.8 259.6 C141 256 148 253 154 248 C151 232 152 218 156 205 C160 195 163 190 168 186Z" fill="#2b2b2b"/>
<path d="M160 262 C157 272 154 282 152 290 M170 255 C166 265 162 275 158 283 M182 222 C178 235 176 248 177 262" fill="none" stroke="#000" stroke-width="1.6"/>
</g></g></svg></div><div class="brk b1"></div><div class="brk b2"></div><div class="brk b3"></div><div class="brk b4"></div><div class="name">hair</div></div>
<div class="row" style="top:251px"><div class="eyecol"></div><svg class="eye" width="14" height="9" viewBox="0 0 14 9"><path d="M0.2 4.5C2.8 -0.3 11.2 -0.3 13.8 4.5C11.2 9.3 2.8 9.3 0.2 4.5Z" fill="#d6d6d6"/><circle cx="7" cy="4.5" r="2.9" fill="#4e4e4e"/><circle cx="7.9" cy="3.5" r="0.8" fill="#cfcfcf"/></svg><div class="thumb"><svg width="24" height="30" viewBox="3 3 444 555" preserveAspectRatio="xMinYMin meet" style="position:absolute;left:0;top:0" stroke-linejoin="round"><g stroke="#000" stroke-width="3.2"><path d="M254 378 L266 373 L268 386 L257 388Z" fill="#9a7a55" stroke-width="2.4"/><ellipse cx="259.3" cy="392.3" rx="4.6" ry="5.4" transform="rotate(35 259.3 392.3)" fill="#e6c694" stroke-width="2.4"/><ellipse cx="274.8" cy="387.4" rx="6.2" ry="3.9" transform="rotate(35 274.8 387.4)" fill="#e6c694" stroke-width="2.4"/><ellipse cx="266.8" cy="390" rx="4.4" ry="6.6" transform="rotate(-35 266.8 390)" fill="#e6c694" stroke-width="2.4"/><ellipse cx="269.7" cy="377.8" rx="4.8" ry="6.3" transform="rotate(30 269.7 377.8)" fill="#e6c694" stroke-width="2.4"/></g></svg></div><div class="name">left_fingers</div></div>
<div class="row" style="top:292px"><div class="eyecol"></div><svg class="eye" width="14" height="9" viewBox="0 0 14 9"><path d="M0.2 4.5C2.8 -0.3 11.2 -0.3 13.8 4.5C11.2 9.3 2.8 9.3 0.2 4.5Z" fill="#d6d6d6"/><circle cx="7" cy="4.5" r="2.9" fill="#4e4e4e"/><circle cx="7.9" cy="3.5" r="0.8" fill="#cfcfcf"/></svg><div class="thumb"><svg width="24" height="30" viewBox="3 3 444 555" preserveAspectRatio="xMinYMin meet" style="position:absolute;left:0;top:0" stroke-linejoin="round"><g stroke="#000" stroke-width="3.2"><path d="M133.4 369.5 C129 373 126 377 124.7 380.5 C124 384 124.5 387 125.5 388.4 C127 390 128.5 390.5 129.5 390.8 L130.3 393 C132 394 133 394 134.2 394 C135 397 136 400 137.4 401 C139 402 141 402 142.9 401 C145 398 146 395 147.6 393 C150 390 152 388 154 386 C155 384.5 155.5 383 155.5 381 L140 372Z" fill="#e6c694" stroke-width="2.8"/>
<path d="M149 384 C151 386 152 388 150 391" fill="none" stroke="#a88460" stroke-width="2.5"/><path d="M128.5 361 C138 368 148 375 159 380 L162 372 L140 356Z" fill="#a0142a" stroke="none"/><path d="M129.2 362.2 C138 369 148 375 158.4 380.5" fill="none" stroke-width="3"/></g></svg></div><div class="name">right_arm</div></div>
<div class="row" style="top:333px"><div class="eyecol"></div><svg class="eye" width="14" height="9" viewBox="0 0 14 9"><path d="M0.2 4.5C2.8 -0.3 11.2 -0.3 13.8 4.5C11.2 9.3 2.8 9.3 0.2 4.5Z" fill="#d6d6d6"/><circle cx="7" cy="4.5" r="2.9" fill="#4e4e4e"/><circle cx="7.9" cy="3.5" r="0.8" fill="#cfcfcf"/></svg><div class="thumb"><svg width="24" height="30" viewBox="3 3 444 555" preserveAspectRatio="xMinYMin meet" style="position:absolute;left:0;top:0" stroke-linejoin="round"><g stroke="#000" stroke-width="3.2">
<path d="M205 294 C210 308 218 320 225 330 M243 298 C238 312 232 322 226 330" fill="none" stroke="#111" stroke-width="3.6" stroke-dasharray="4.2 1" stroke-linecap="butt"/>
<path d="M205 294 C210 308 218 320 225 330 M243 298 C238 312 232 322 226 330" fill="none" stroke="#4a4a4a" stroke-width="1.6" stroke-dasharray="2.6 2.6" stroke-dashoffset="-0.8" stroke-linecap="round"/>

<path d="M225 328 L228 328 L228.5 335 L224.5 335Z" fill="#3a3a3a" stroke="#111" stroke-width="1.5"/>
<path d="M222.1 335 L238.5 331.1 L242.4 345 L242.4 354.7 L236.6 369.2 L221.1 364.4 L204.3 348.4 L214.4 338.3Z" fill="#4a4a4a" stroke="#111" stroke-width="2"/>
<path d="M215.4 345.6 L220.7 339.3 L229.8 339.3 L224 346Z M213.4 350.9 L224 349.9 L229.8 360.5 L220.2 361.5Z M231.3 347 L236.6 342.2 L238.5 351.8 L234.6 358.6Z" fill="#a0142a" stroke="#111" stroke-width="1.5"/>
<path d="M207 348 L214 340 M222 336 L237 333" fill="none" stroke="#777" stroke-width="1.2"/>
</g></svg></div><div class="name">amulet</div></div>
<div class="row" style="top:374px"><div class="eyecol"></div><svg class="eye" width="14" height="9" viewBox="0 0 14 9"><path d="M0.2 4.5C2.8 -0.3 11.2 -0.3 13.8 4.5C11.2 9.3 2.8 9.3 0.2 4.5Z" fill="#d6d6d6"/><circle cx="7" cy="4.5" r="2.9" fill="#4e4e4e"/><circle cx="7.9" cy="3.5" r="0.8" fill="#cfcfcf"/></svg><div class="thumb"><svg width="24" height="30" viewBox="3 3 444 555" preserveAspectRatio="xMinYMin meet" style="position:absolute;left:0;top:0" stroke-linejoin="round"><g stroke="#000" stroke-width="3.2">
<path d="M172 300 C163 320 150 338 130 362 C140 371 150 377 158 381 C155 392 152 400 149 407 C168 418 200 423 207.7 423 C225 422 245 419 260 415.5 C258 400 255 390 255 380 C262 377 268 374 274 370 C270 350 262 335 256 322 C252 310 250 300 247.6 288 C225 290 195 288 172 292 L172 300Z" fill="#a0142a"/>
<path d="M158 381 C160 370 164 362 167 358" fill="none" stroke="#6a0c18" stroke-width="2"/>
<path d="M248 294 C251 305 254 315 257 324 C263 338 269 352 272.5 369 L266 372 C261 352 255 336 251 322 C249 312 248 302 248 294Z" fill="#7e0f1f" stroke="none"/><path d="M255 380 C252 350 249 320 246 300" fill="none" stroke="#7a0e1e" stroke-width="2"/>
</g></svg></div><div class="name">body</div></div>
<div class="row" style="top:415px"><div class="eyecol"></div><svg class="eye" width="14" height="9" viewBox="0 0 14 9"><path d="M0.2 4.5C2.8 -0.3 11.2 -0.3 13.8 4.5C11.2 9.3 2.8 9.3 0.2 4.5Z" fill="#d6d6d6"/><circle cx="7" cy="4.5" r="2.9" fill="#4e4e4e"/><circle cx="7.9" cy="3.5" r="0.8" fill="#cfcfcf"/></svg><div class="thumb"><svg width="24" height="30" viewBox="3 3 444 555" preserveAspectRatio="xMinYMin meet" style="position:absolute;left:0;top:0" stroke-linejoin="round"><g stroke="#000" stroke-width="3.2"><path d="M247.6 291 C252 310 262 335 274 370 L255 380 C252 350 249 320 246 300Z" fill="#a0142a"/></g></svg></div><div class="name">left_arm</div></div>
<div class="row" style="top:456px"><div class="eyecol"></div><svg class="eye" width="14" height="9" viewBox="0 0 14 9"><path d="M0.2 4.5C2.8 -0.3 11.2 -0.3 13.8 4.5C11.2 9.3 2.8 9.3 0.2 4.5Z" fill="#d6d6d6"/><circle cx="7" cy="4.5" r="2.9" fill="#4e4e4e"/><circle cx="7.9" cy="3.5" r="0.8" fill="#cfcfcf"/></svg><div class="thumb"><svg width="24" height="30" viewBox="3 3 444 555" preserveAspectRatio="xMinYMin meet" style="position:absolute;left:0;top:0" stroke-linejoin="round"><g stroke="#000" stroke-width="3.2"><path d="M168.5 412 L201.5 412 L201 446 L168.5 446Z" fill="#d6c793"/>
<path d="M196 414 L201.5 414 L201 444 L195 444Z" fill="#b3a470" stroke="none"/>
<path d="M165.5 441 C172 444 190 448 201.5 442.8 C203 448 202 453 200.7 456 C190 461 175 460 165.5 456 C163 451 163 446 165.5 441Z" fill="#8d7d4d"/>
<path d="M169 458 C180 461 192 461 200 458 C201 464 201.5 470 201.5 475 C203 480 204 485 202.4 489 C200 495 195 497.5 188 497.5 C178 497.5 170 495 166.5 491 C163 486 163.5 480 165 475 C167 470 169 464 169 458Z" fill="#4a3209"/>
<path d="M168 466 C166 474 165 482 167 490 C170 494 176 496 180 497 C172 490 169 480 168 466Z" fill="#2a1c04" stroke="none"/><path d="M193 443 C197 445 200 447 201 452 C201 455 199 457 197 457 C198 452 197 447 193 443Z" fill="#6e6036" stroke="none"/>
<path d="M182 464 L189 472 M189 464 L182 472" fill="none" stroke="#231703" stroke-width="1.8"/></g></svg></div><div class="name">right_leg</div></div>
<div class="row" style="top:497px"><div class="eyecol"></div><svg class="eye" width="14" height="9" viewBox="0 0 14 9"><path d="M0.2 4.5C2.8 -0.3 11.2 -0.3 13.8 4.5C11.2 9.3 2.8 9.3 0.2 4.5Z" fill="#d6d6d6"/><circle cx="7" cy="4.5" r="2.9" fill="#4e4e4e"/><circle cx="7.9" cy="3.5" r="0.8" fill="#cfcfcf"/></svg><div class="thumb"><svg width="24" height="30" viewBox="3 3 444 555" preserveAspectRatio="xMinYMin meet" style="position:absolute;left:0;top:0" stroke-linejoin="round"><g stroke="#000" stroke-width="3.2"><path d="M214 416 L246.5 416 L246.5 443 L214 443Z" fill="#d6c793"/>
<path d="M241 416 L246.5 416 L246.5 442 L240 442Z" fill="#b3a470" stroke="none"/>
<path d="M211 440 C220 444 238 445 247.5 440 C249 446 249 451 247.5 455.5 C238 460 220 460 211 455.5 C209 450 209 445 211 440Z" fill="#8d7d4d"/>
<path d="M214 457 C225 460 238 460 246.5 457 C247.5 463 248 469 248.5 474 C251 479 252 484 251 487.5 C249 491 244 493 236 493 C226 493 218 491 214 487 C210.5 482 211 476 212 472 C213.5 467 214.5 462 214 457Z" fill="#4a3209"/>
<path d="M213 466 C211 474 211 482 213 487 C216 490 221 492 225 493 C218 486 214 478 213 466Z" fill="#2a1c04" stroke="none"/><path d="M239 442 C244 444 247 446 247.5 451 C247.5 454 246 456 244 456 C245 451 243 446 239 442Z" fill="#6e6036" stroke="none"/>
<path d="M227 463 L234 471 M234 463 L227 471" fill="none" stroke="#231703" stroke-width="1.8"/></g></svg></div><div class="name">left_leg</div></div>
<!-- scrollbar -->
<div class="abs" style="left:672px;top:129px;width:16px;height:407px;background:#4a4a4a"></div>
<svg class="abs" style="left:675px;top:136px" width="10" height="6" viewBox="0 0 10 6"><path d="M1 5L5 1L9 5" fill="none" stroke="#8a8a8a" stroke-width="1.2"/></svg>
<div class="abs" style="left:674px;top:203px;width:12px;height:286px;background:#676767"></div>
<svg class="abs" style="left:675px;top:523px" width="10" height="6" viewBox="0 0 10 6"><path d="M1 1L5 5L9 1" fill="none" stroke="#8a8a8a" stroke-width="1.2"/></svg>
<!-- bottom toolbar -->
<div class="abs" style="left:451px;top:537px;width:237px;height:24px;background:#535353"></div><div class="abs" style="left:451px;top:536px;width:237px;height:1px;background:#434343"></div>
<svg class="abs" style="left:485px;top:544px" width="16" height="9" viewBox="0 0 16 9"><path d="M6 1.5H3.5A3 3 0 0 0 3.5 7.5H6M10 1.5H12.5A3 3 0 0 1 12.5 7.5H10M4.5 4.5H11.5" fill="none" stroke="#9a9a9a" stroke-width="1.3"/></svg>
<div class="abs" style="left:514px;top:540px;font-size:14px;font-style:italic;color:#d8d8d8;font-family:'Liberation Sans',sans-serif;letter-spacing:-0.5px">fx</div>
<svg class="abs" style="left:524px;top:553px" width="5" height="3" viewBox="0 0 5 3"><path d="M0 0H5L2.5 3Z" fill="#e0e0e0"/></svg>
<svg class="abs" style="left:540px;top:543px" width="14" height="11" viewBox="0 0 14 11"><rect x="0" y="0" width="14" height="11" fill="#d8d8d8"/><circle cx="7" cy="5.5" r="3.2" fill="#535353"/></svg>
<svg class="abs" style="left:568px;top:543px" width="12" height="12" viewBox="0 0 12 12"><circle cx="6" cy="6" r="5" fill="none" stroke="#d8d8d8" stroke-width="1.3"/><path d="M9.6 2.4A5 5 0 0 1 2.4 9.6Z" fill="#d8d8d8"/></svg>
<svg class="abs" style="left:578px;top:554px" width="5" height="3" viewBox="0 0 5 3"><path d="M0 0H5L2.5 3Z" fill="#e0e0e0"/></svg>
<svg class="abs" style="left:595px;top:543px" width="14" height="11" viewBox="0 0 14 11"><path d="M0 1H5.5V2H14V11H0Z" fill="#d8d8d8"/><path d="M0 2.5H14" stroke="#535353" stroke-width="0.8"/></svg>
<svg class="abs" style="left:622px;top:543px" width="12" height="12" viewBox="0 0 12 12"><path d="M0.7 0.7H11.3V11.3H4L0.7 8Z" fill="none" stroke="#d8d8d8" stroke-width="1.3"/><path d="M0.7 8H4V11.3Z" fill="#d8d8d8"/></svg>
<svg class="abs" style="left:649px;top:542px" width="12" height="14" viewBox="0 0 12 14"><path d="M0 2.5H12M4 2.5V0.8H8V2.5" fill="none" stroke="#d8d8d8" stroke-width="1.2"/><path d="M1.5 3.5H10.5V13.3H1.5Z" fill="none" stroke="#d8d8d8" stroke-width="1.2"/><path d="M4.3 5.5V11.5M6 5.5V11.5M7.7 5.5V11.5" stroke="#d8d8d8" stroke-width="1"/></svg>
<div class="abs" style="left:451px;top:561px;width:237px;height:2px;background:#383838"></div>
<div class="abs" style="left:451px;top:563px;width:237px;height:7px;background:#4b4b4b"></div>
<div class="abs" style="left:562px;top:564px;width:16px;height:5px;background:repeating-linear-gradient(90deg,#5c5c5c 0 1px,transparent 1px 2px)"></div>

</body></html>
